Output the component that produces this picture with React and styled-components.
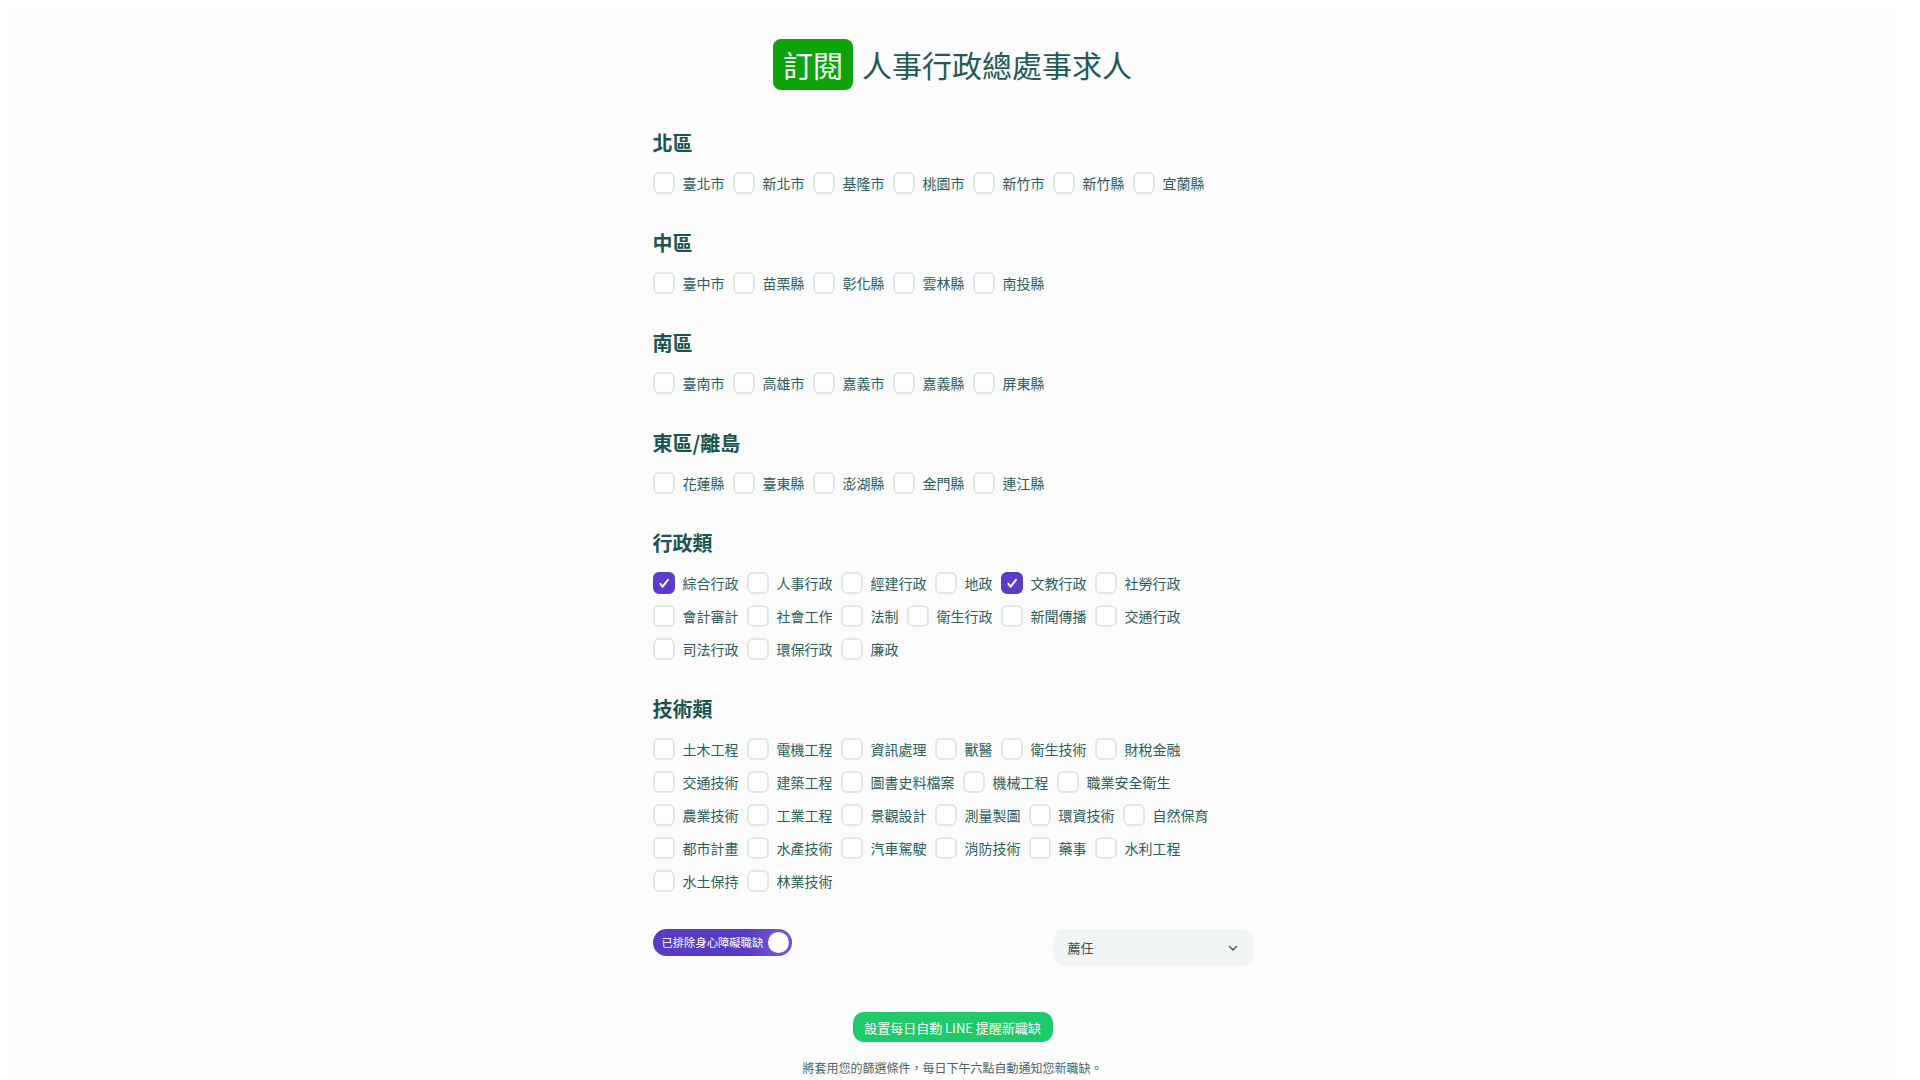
import React, { useState } from "react";
import styled, { createGlobalStyle } from "styled-components";

const Global = createGlobalStyle`
  html { background: #ffffff; }
  body {
    margin: 8px 23px 8px 8px;
    background: #ffffff;
    font-family: "Noto Sans CJK TC", "Noto Sans", "Liberation Sans", sans-serif;
    color: #2a5c5a;
  }
  * { box-sizing: border-box; }
`;

const Page = styled.div`
  background: #fcfcfc;
  min-height: 1130px;
  padding: 31px 0 60px;
`;

const Container = styled.main`
  width: 600px;
  margin: 0 auto;
  display: flex;
  flex-direction: column;
`;

const TitleRow = styled.h1`
  margin: 0 0 39px;
  display: flex;
  justify-content: center;
  align-items: center;
  gap: 9px;
  font-size: 30px;
  font-weight: 400;
  color: #1f5a58;
  line-height: 51px;
`;

const Badge = styled.span`
  display: inline-block;
  height: 51px;
  padding: 0 10px;
  border-radius: 8px;
  background: #0ca30d;
  color: #ffffff;
  font-size: 30px;
  line-height: 51px;
`;

const Section = styled.section`
  margin-bottom: 35px;
`;

const Heading = styled.h2`
  margin: 0 0 15px;
  font-size: 20px;
  line-height: 28px;
  font-weight: 700;
  color: #1b5552;
`;

const Options = styled.div`
  display: flex;
  flex-wrap: wrap;
  column-gap: 8px;
  row-gap: 11px;
`;

const Option = styled.label`
  display: flex;
  align-items: center;
  gap: 8px;
  height: 22px;
  cursor: pointer;
`;

const Box = styled.span`
  width: 22px;
  height: 22px;
  border-radius: 6px;
  border: 2px solid ${(p) => (p.$checked ? "#5b3dc8" : "#e0e7e7")};
  background: ${(p) => (p.$checked ? "#5b3dc8" : "#ffffff")};
  display: flex;
  align-items: center;
  justify-content: center;
  flex: none;
`;

const Label = styled.span`
  font-size: 14px;
  line-height: 22px;
  color: #2c5e5b;
  white-space: nowrap;
`;

const Controls = styled.div`
  margin-top: 2px;
  display: flex;
  justify-content: space-between;
  align-items: flex-start;
`;

const Toggle = styled.button`
  width: 139px;
  height: 27px;
  border: none;
  border-radius: 14px;
  padding: 0 3px 0 9px;
  background: linear-gradient(90deg, #5a3bc6 0%, #5a3bc6 68%, #7157d2 90%, #6a4fce 100%);
  display: flex;
  align-items: center;
  justify-content: space-between;
  cursor: pointer;
`;

const ToggleText = styled.span`
  font-family: "Noto Sans CJK TC", sans-serif;
  font-size: 11.3px;
  color: #ffffff;
  line-height: 27px;
`;

const Knob = styled.span`
  width: 21px;
  height: 21px;
  border-radius: 50%;
  background: #ffffff;
  box-shadow: 0 0 0 1px rgba(120, 90, 210, 0.4);
`;

const Select = styled.div`
  width: 200px;
  height: 37px;
  border-radius: 12px;
  background: #f1f5f5;
  display: flex;
  align-items: center;
  justify-content: space-between;
  padding: 0 14px 0 15px;
  font-size: 13px;
  color: #3b4d4d;
`;

const Actions = styled.div`
  margin-top: 46px;
  display: flex;
  flex-direction: column;
  align-items: center;
`;

const LineButton = styled.button`
  width: 200px;
  height: 30px;
  border: none;
  border-radius: 11px;
  background: #1fca6a;
  color: #ffffff;
  font-family: "Noto Sans CJK TC", "Noto Sans", sans-serif;
  font-size: 13px;
  cursor: pointer;
`;

const Note = styled.p`
  margin: 17px 0 0;
  font-size: 12px;
  line-height: 17px;
  color: #4a6464;
`;

const Check = () => (
  <svg width="14" height="14" viewBox="0 0 14 14" fill="none">
    <path
      d="M3.4 7.8 L5.6 10.6 L11 3.8"
      stroke="#ffffff"
      strokeWidth="2"
      strokeLinecap="round"
      strokeLinejoin="round"
    />
  </svg>
);

const Chevron = () => (
  <svg width="12" height="12" viewBox="0 0 12 12" fill="none">
    <path d="M2.5 4.5 L6 8 L9.5 4.5" stroke="#3b4d4d" strokeWidth="1.3" strokeLinecap="round" strokeLinejoin="round" />
  </svg>
);

const sections = [
  { title: "北區", items: ["臺北市", "新北市", "基隆市", "桃園市", "新竹市", "新竹縣", "宜蘭縣"] },
  { title: "中區", items: ["臺中市", "苗栗縣", "彰化縣", "雲林縣", "南投縣"] },
  { title: "南區", items: ["臺南市", "高雄市", "嘉義市", "嘉義縣", "屏東縣"] },
  { title: "東區/離島", items: ["花蓮縣", "臺東縣", "澎湖縣", "金門縣", "連江縣"] },
  {
    title: "行政類",
    items: [
      "綜合行政", "人事行政", "經建行政", "地政", "文教行政", "社勞行政",
      "會計審計", "社會工作", "法制", "衛生行政", "新聞傳播", "交通行政",
      "司法行政", "環保行政", "廉政",
    ],
  },
  {
    title: "技術類",
    items: [
      "土木工程", "電機工程", "資訊處理", "獸醫", "衛生技術", "財稅金融",
      "交通技術", "建築工程", "圖書史料檔案", "機械工程", "職業安全衛生",
      "農業技術", "工業工程", "景觀設計", "測量製圖", "環資技術", "自然保育",
      "都市計畫", "水產技術", "汽車駕駛", "消防技術", "藥事", "水利工程",
      "水土保持", "林業技術",
    ],
  },
];

export default function App() {
  const [checked, setChecked] = useState({ 綜合行政: true, 文教行政: true });
  const toggle = (k) => setChecked((c) => ({ ...c, [k]: !c[k] }));

  return (
    <>
      <Global />
      <Page>
        <Container>
          <TitleRow>
            <Badge>訂閱</Badge>
            人事行政總處事求人
          </TitleRow>

          {sections.map((s) => (
            <Section key={s.title}>
              <Heading>{s.title}</Heading>
              <Options>
                {s.items.map((it) => (
                  <Option key={it} onClick={() => toggle(it)}>
                    <Box $checked={!!checked[it]}>{checked[it] && <Check />}</Box>
                    <Label>{it}</Label>
                  </Option>
                ))}
              </Options>
            </Section>
          ))}

          <Controls>
            <Toggle>
              <ToggleText>已排除身心障礙職缺</ToggleText>
              <Knob />
            </Toggle>
            <Select>
              <span>薦任</span>
              <Chevron />
            </Select>
          </Controls>

          <Actions>
            <LineButton>設置每日自動 LINE 提醒新職缺</LineButton>
            <Note>將套用您的篩選條件，每日下午六點自動通知您新職缺。</Note>
          </Actions>
        </Container>
      </Page>
    </>
  );
}
